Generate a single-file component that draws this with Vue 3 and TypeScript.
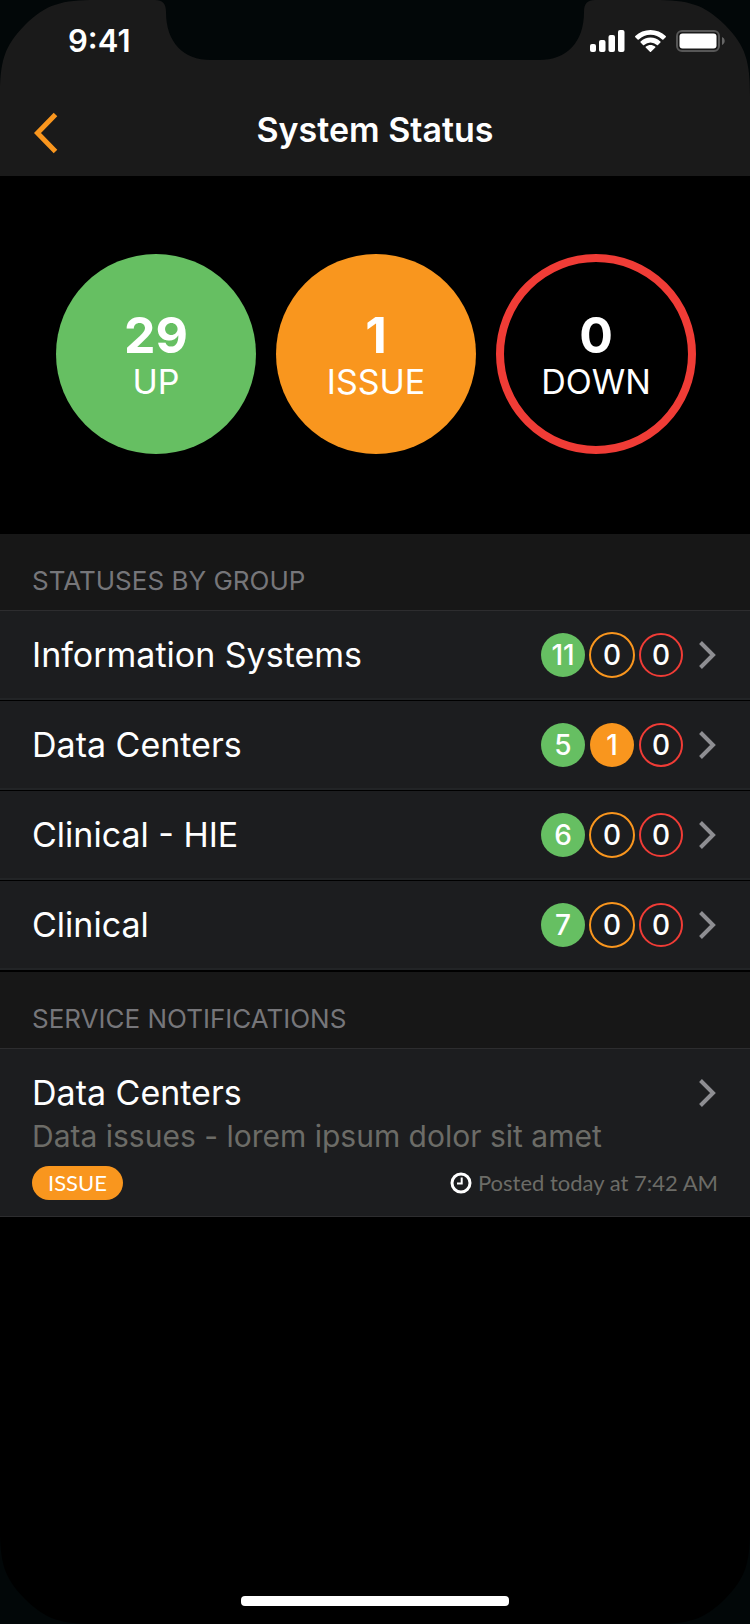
<script setup lang="ts">
type Tone = 'up' | 'issue' | 'down'

interface Count {
  tone: Tone
  label: string
  value: number
}

interface Group {
  name: string
  counts: Count[]
}

const makeCounts = (up: number, issue: number, down: number): Count[] => [
  { tone: 'up', label: 'UP', value: up },
  { tone: 'issue', label: 'ISSUE', value: issue },
  { tone: 'down', label: 'DOWN', value: down },
]

const totals = makeCounts(29, 1, 0)

const groups: Group[] = [
  { name: 'Information Systems', counts: makeCounts(11, 0, 0) },
  { name: 'Data Centers', counts: makeCounts(5, 1, 0) },
  { name: 'Clinical - HIE', counts: makeCounts(6, 0, 0) },
  { name: 'Clinical', counts: makeCounts(7, 0, 0) },
]
</script>

<template>
  <div class="phone">
    <svg class="corner top-left" viewBox="0 0 96 96" aria-hidden="true">
      <path d="M0 0V96C0 62 4 46 25 25C46 4 62 0 96 0Z" />
    </svg>
    <svg class="corner top-right" viewBox="0 0 96 96" aria-hidden="true">
      <path d="M0 0V96C0 62 4 46 25 25C46 4 62 0 96 0Z" />
    </svg>
    <svg class="corner bottom-left" viewBox="0 0 96 96" aria-hidden="true">
      <path d="M0 0V96C0 62 4 46 25 25C46 4 62 0 96 0Z" />
    </svg>
    <svg class="corner bottom-right" viewBox="0 0 96 96" aria-hidden="true">
      <path d="M0 0V96C0 62 4 46 25 25C46 4 62 0 96 0Z" />
    </svg>
    <svg class="notch" viewBox="0 0 440 60" aria-hidden="true">
      <path d="M0 0C8 0 11 4 11 12C11 42 28 60 56 60H384C412 60 429 42 429 12C429 4 432 0 440 0Z" />
    </svg>

    <header class="top">
      <div class="status-bar">
        <time class="clock">9:41</time>
        <div class="indicators">
          <svg width="35" height="22" viewBox="0 0 35 22" fill="#fff" aria-label="Signal" role="img">
            <rect x="0" y="14" width="6" height="8" rx="2" />
            <rect x="9" y="10" width="6.500" height="12" rx="2" />
            <rect x="18.500" y="5" width="6.500" height="17" rx="2" />
            <rect x="28" y="0" width="6.500" height="22" rx="2" />
          </svg>
          <svg width="31" height="22" viewBox="0 0 31 22" fill="#fff" aria-label="Wi-Fi" role="img">
            <path d="M15.500 0C9.700 0 4.300 2.200.3 6.100a.9.900 0 0 0 0 1.200l2.300 2.300c.3.300.8.300 1.200 0a16.800 16.800 0 0 1 23.400 0c.4.300.9.300 1.200 0l2.300-2.300a.9.900 0 0 0 0-1.200C26.700 2.200 21.300 0 15.500 0Z" />
            <path d="M15.500 7.500c-3.700 0-7.200 1.400-9.900 3.900a.8.800 0 0 0 0 1.200l2.400 2.400c.3.300.8.300 1.100 0a9.400 9.400 0 0 1 12.800 0c.3.300.8.300 1.100 0l2.400-2.400a.8.800 0 0 0 0-1.200c-2.700-2.500-6.200-3.900-9.900-3.900Z" />
            <path d="M15.500 15c-1.700 0-3.300.6-4.600 1.600a.8.800 0 0 0 0 1.200l4 4c.3.300.8.300 1.100 0l4.100-4a.8.800 0 0 0 0-1.200C18.800 15.600 17.200 15 15.500 15Z" />
          </svg>
          <svg width="49" height="22" viewBox="0 0 49 22" aria-label="Battery" role="img">
            <rect x="1" y="1" width="42" height="20" rx="5" fill="none" stroke="#575757" stroke-width="2" />
            <rect x="3.500" y="3.500" width="37" height="15" rx="3" fill="#fff" />
            <path d="M46 7v8c1.700-.7 2.700-2.300 2.700-4S47.700 7.700 46 7Z" fill="#666" />
          </svg>
        </div>
      </div>
      <div class="nav">
        <button class="back" type="button" aria-label="Back">
          <svg width="24" height="42" viewBox="0 0 24 42" fill="none" stroke="#f9961e" stroke-width="5">
            <path d="M21.500 2.500L3.500 21L21.500 39.500" />
          </svg>
        </button>
        <h1>System Status</h1>
      </div>
    </header>

    <main>
      <section class="totals" aria-label="Totals">
        <div
          v-for="total in totals"
          :key="total.tone"
          class="total"
          :class="[total.tone, { empty: total.value === 0 }]"
        >
          <strong>{{ total.value }}</strong>
          <span>{{ total.label }}</span>
        </div>
      </section>

      <section>
        <h2>STATUSES BY GROUP</h2>
        <ul class="groups">
          <li v-for="group in groups" :key="group.name">
            <a class="row" href="#">
              <span class="name">{{ group.name }}</span>
              <span class="counts">
                <span
                  v-for="count in group.counts"
                  :key="count.tone"
                  class="count"
                  :class="[count.tone, { empty: count.value === 0 }]"
                >{{ count.value }}</span>
              </span>
              <svg class="chevron" viewBox="0 0 17 28" aria-hidden="true">
                <path d="M1.500 1.500L14 14L1.500 26.500" />
              </svg>
            </a>
          </li>
        </ul>
      </section>

      <section>
        <h2 class="notifications-title">SERVICE NOTIFICATIONS</h2>
        <a class="notice" href="#">
          <span class="notice-head">
            <span class="name">Data Centers</span>
            <svg class="chevron" viewBox="0 0 17 28" aria-hidden="true">
              <path d="M1.500 1.500L14 14L1.500 26.500" />
            </svg>
          </span>
          <span class="detail">Data issues - lorem ipsum dolor sit amet</span>
          <span class="meta">
            <span class="tag">ISSUE</span>
            <span class="posted">
              <svg width="22" height="22" viewBox="0 0 22 22" fill="none" stroke="#fff" aria-hidden="true">
                <circle cx="11" cy="11" r="9" stroke-width="3" />
                <path d="M11.700 5.500V11.500H7" stroke-width="2" />
              </svg>
              Posted today at 7:42 AM
            </span>
          </span>
        </a>
      </section>
    </main>

    <div class="home-bar"></div>
  </div>
</template>

<style>
body {
  margin: 0;
  background: #000;
}
</style>

<style scoped>
.phone {
  position: relative;
  display: flex;
  flex-direction: column;
  box-sizing: border-box;
  min-height: 100vh;
  padding-bottom: 18px;
  overflow: hidden;
  background: #000;
  color: #fff;
  font-family: Inter, "Liberation Sans", sans-serif;
}

.corner,
.notch {
  position: absolute;
  z-index: 1;
  fill: #020708;
  pointer-events: none;
}

.corner {
  width: 96px;
  height: 96px;
}

.top-left {
  top: 0;
  left: 0;
}

.top-right {
  top: 0;
  right: 0;
  transform: scaleX(-1);
}

.bottom-left {
  bottom: 0;
  left: 0;
  transform: scaleY(-1);
}

.bottom-right {
  right: 0;
  bottom: 0;
  transform: scale(-1);
}

.notch {
  top: 0;
  left: 50%;
  width: 440px;
  height: 60px;
  transform: translateX(-50%);
}

.top {
  background: #1a1a1a;
}

.status-bar {
  display: flex;
  align-items: center;
  justify-content: space-between;
  height: 82px;
  padding: 0 25px 0 68px;
}

.clock {
  font-size: 31px;
  font-weight: 600;
  line-height: 36px;
}

.indicators {
  display: flex;
  gap: 10px;
}

.nav {
  display: grid;
  grid-template-columns: 60px 1fr 60px;
  align-items: center;
  box-sizing: border-box;
  height: 94px;
  padding: 2px 34px 0;
}

.back {
  display: flex;
  padding: 6px 0 0;
  border: 0;
  background: none;
}

h1 {
  margin: 0;
  font-size: 34px;
  font-weight: 600;
  line-height: 40px;
  text-align: center;
}

.totals {
  display: flex;
  align-items: center;
  justify-content: center;
  gap: 20px;
  box-sizing: border-box;
  height: 358px;
  padding: 0 0 2px 2px;
}

.total {
  display: flex;
  flex-direction: column;
  align-items: center;
  justify-content: center;
  box-sizing: border-box;
  width: 200px;
  height: 200px;
  padding-top: 4px;
  border-radius: 50%;
}

.total strong {
  font-size: 50px;
  font-weight: 700;
  line-height: 52px;
}

.total span {
  font-size: 34px;
  line-height: 42px;
}

.up {
  background: #66bf62;
}

.issue {
  background: #f9961e;
}

.down {
  background: #f03c36;
}

.total.empty {
  border: 8px solid #f03c36;
  background: none;
}

h2 {
  box-sizing: border-box;
  height: 77px;
  margin: 0;
  padding: 31px 32px 0;
  border-bottom: 1px solid #2d2d2f;
  background: #171717;
  color: #76767a;
  font-size: 26px;
  font-weight: 400;
  line-height: 32px;
}

.notifications-title {
  height: 78px;
  border-top: 1px solid #000;
}

.groups {
  margin: 0;
  padding: 0;
  list-style: none;
}

.row {
  display: flex;
  align-items: center;
  box-sizing: border-box;
  height: 90px;
  padding: 0 34px 2px 32px;
  border-bottom: 1px solid #000;
  background: #1c1d1f;
  box-shadow: inset 0 -2px #222426;
  color: inherit;
  text-decoration: none;
}

.name {
  flex: 1;
  font-size: 34px;
  line-height: 40px;
}

.counts {
  display: flex;
  align-items: center;
  gap: 4px;
  margin-right: 16px;
}

.count {
  display: flex;
  align-items: center;
  justify-content: center;
  box-sizing: border-box;
  width: 44px;
  height: 44px;
  border: 2px solid transparent;
  border-radius: 50%;
  background-origin: border-box;
  font-size: 28px;
  font-weight: 500;
  line-height: 32px;
}

.count.issue {
  margin: 0 1px;
}

.count.empty {
  background: none;
}

.count.issue.empty {
  width: 46px;
  height: 46px;
  margin: 0;
  border-color: #f9961e;
}

.count.down.empty {
  border-color: #f03c36;
}

.chevron {
  width: 17px;
  height: 28px;
  fill: none;
  stroke: #8e8e92;
  stroke-width: 4;
}

.notice {
  display: flex;
  flex-direction: column;
  padding: 24px 32px 16px;
  border-bottom: 1px solid #2d2d2f;
  background: #1c1d1f;
  color: inherit;
  text-decoration: none;
}

.notice-head {
  display: flex;
  align-items: center;
  padding-right: 2px;
}

.detail {
  margin-top: 3px;
  color: #6c6c67;
  font-size: 30px;
  line-height: 40px;
}

.meta {
  display: flex;
  align-items: center;
  justify-content: space-between;
  margin-top: 10px;
  font-family: Lato, "Open Sans", sans-serif;
  font-size: 22px;
  line-height: 34px;
}

.tag {
  padding: 0 16px;
  border-radius: 17px;
  background: #f9961e;
}

.posted {
  display: flex;
  align-items: center;
  gap: 6px;
  color: #6c6c67;
}

.home-bar {
  width: 268px;
  height: 10px;
  margin: auto auto 0;
  border-radius: 4px;
  background: #fff;
}
</style>
